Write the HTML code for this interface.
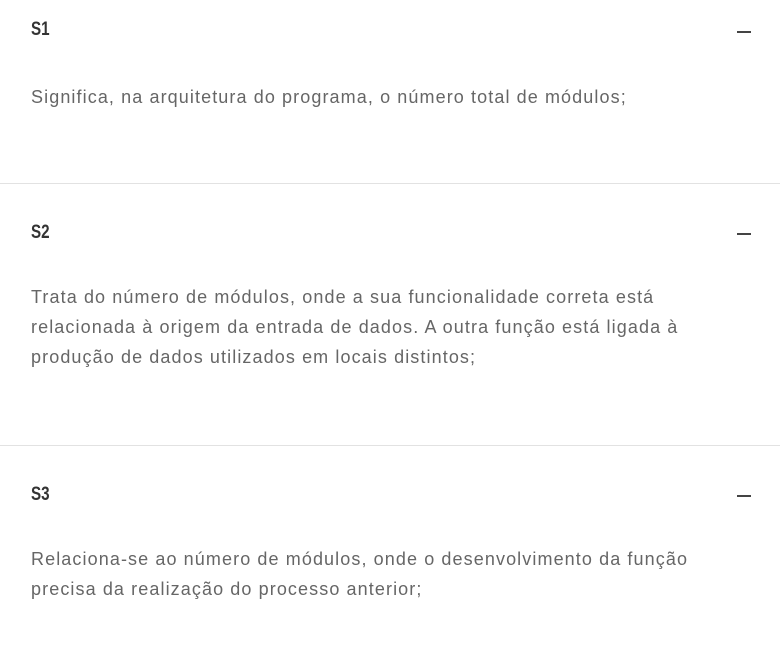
<!DOCTYPE html>
<html><head><meta charset="utf-8"><style>
body{margin:0;width:780px;height:652px;background:#fff;font-family:"Liberation Sans",sans-serif;overflow:hidden;position:relative}
.h{position:absolute;left:31px;font-weight:bold;font-size:19px;color:#333;transform:scaleX(0.8);transform-origin:left}
.m{position:absolute;left:737px;width:14px;height:2px;background:#444}
.t{position:absolute;left:31px;font-size:18px;letter-spacing:1.1px;line-height:30px;color:#666;width:740px;white-space:nowrap}
.d{position:absolute;left:0;width:780px;height:1px;background:#e2e2e2}
</style></head><body>
<div class="h" style="top:19px">S1</div><div class="m" style="top:31px"></div>
<div class="t" style="top:82px">Significa, na arquitetura do programa, o número total de módulos;</div>
<div class="d" style="top:183px"></div>
<div class="h" style="top:222px">S2</div><div class="m" style="top:233px"></div>
<div class="t" style="top:282px">Trata do número de módulos, onde a sua funcionalidade correta está<br>relacionada à origem da entrada de dados. A outra função está ligada à<br>produção de dados utilizados em locais distintos;</div>
<div class="d" style="top:445px"></div>
<div class="h" style="top:484px">S3</div><div class="m" style="top:495px"></div>
<div class="t" style="top:544px">Relaciona-se ao número de módulos, onde o desenvolvimento da função<br>precisa da realização do processo anterior;</div>
</body></html>
